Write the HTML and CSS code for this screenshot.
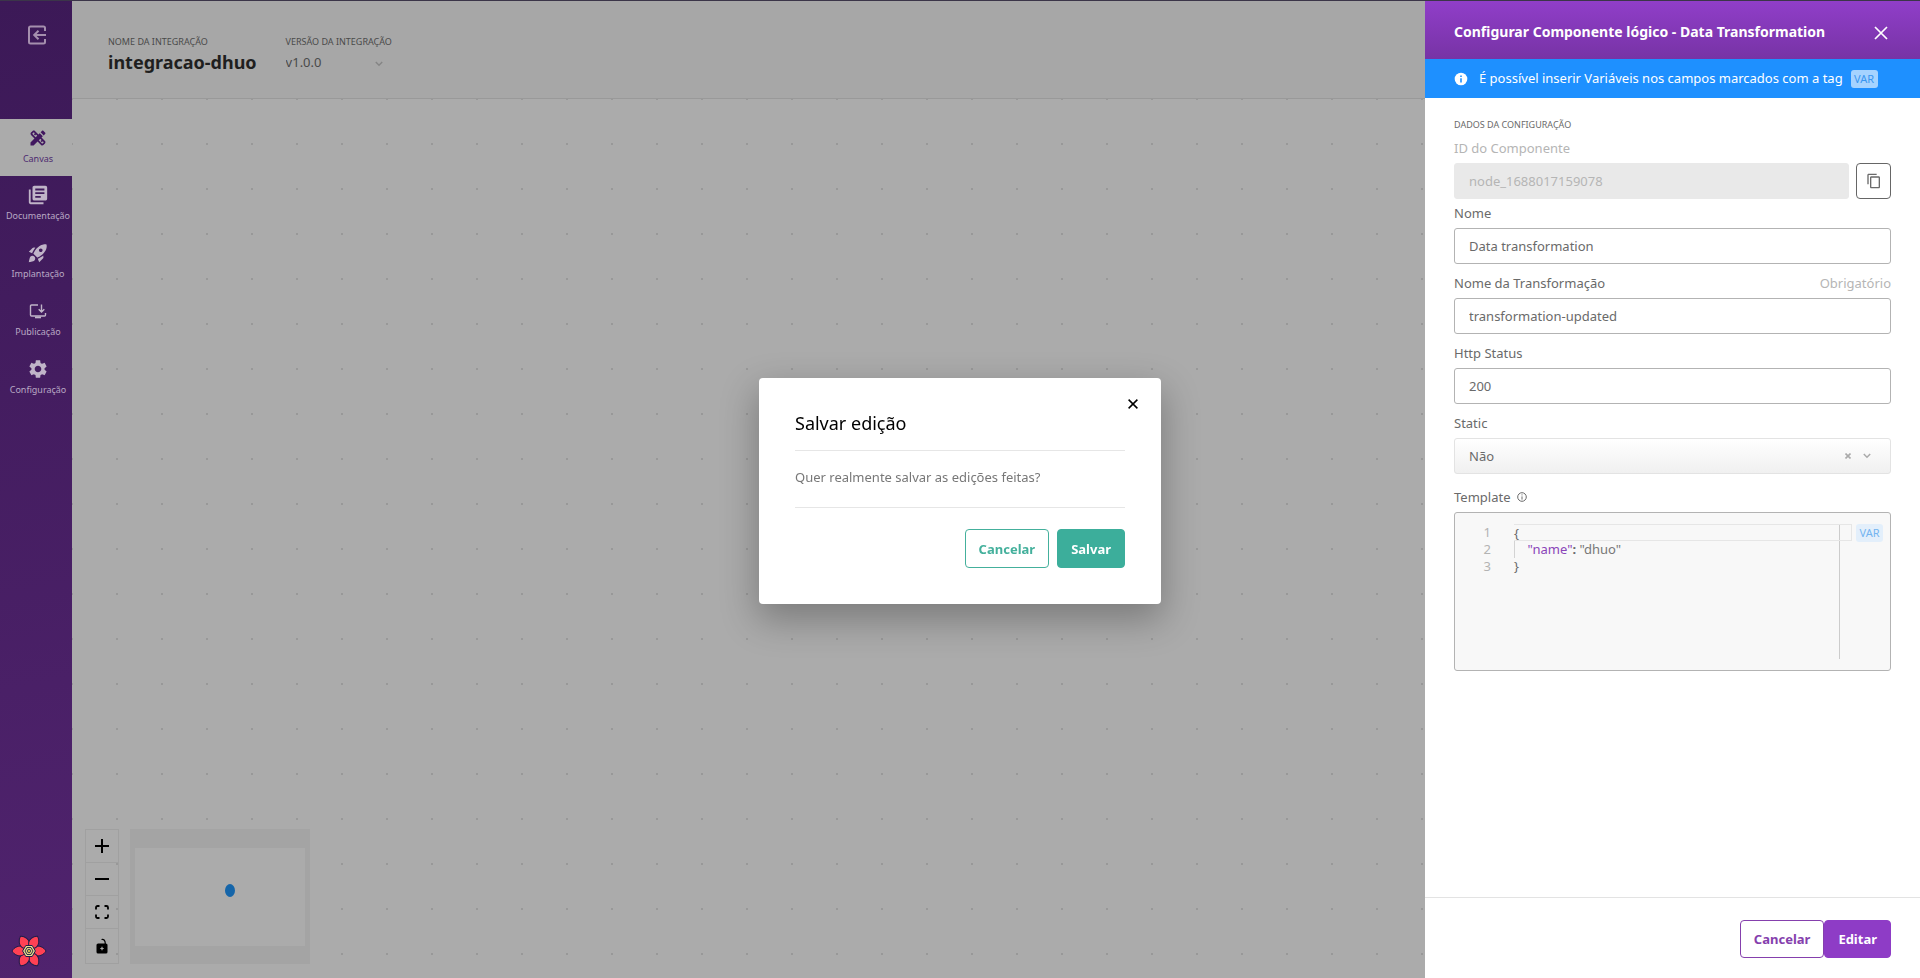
FILE: index.html
```html
<!DOCTYPE html>
<html lang="pt-BR">
<head>
<meta charset="utf-8">
<title>integracao-dhuo</title>
<link rel="stylesheet" href="styles.css">
</head>
<body>
<div class="app">
  <nav class="sidebar">
    <button class="exit" type="button" aria-label="Sair">
      <svg width="20" height="20" viewBox="0 0 20 20" fill="none" stroke="currentColor" stroke-width="2"><path d="M18 6V3a1.500 1.500 0 0 0-1.500-1.500h-13A1.500 1.500 0 0 0 2 3v14a1.500 1.500 0 0 0 1.500 1.500h13A1.500 1.500 0 0 0 18 17v-3M19 10H8M11.500 5.700 7.200 10l4.300 4.300"/></svg>
    </button>
    <a class="nav-item active" href="#canvas">
      <svg width="20" height="20" viewBox="0 0 24 24" fill="currentColor"><path d="M16.240 11.510l1.570-1.570-3.750-3.750-1.570 1.570-4.140-4.130c-.78-.78-2.050-.78-2.830 0l-1.900 1.900c-.78.78-.78 2.050 0 2.830l4.130 4.130L3 17.250V21h3.750l4.760-4.760 4.130 4.130c.95.95 2.230.6 2.830 0l1.900-1.900c.78-.78.78-2.050 0-2.830l-4.130-4.130zm-7.060-.44L5.040 6.940l1.890-1.900L8.200 6.310 7.020 7.500l1.410 1.410 1.190-1.190 1.450 1.450-1.890 1.900zm7.880 7.890l-4.130-4.130 1.900-1.900 1.450 1.450-1.190 1.190 1.410 1.410 1.190-1.190 1.270 1.270-1.900 1.900zM20.710 7.040c.39-.39.39-1.020 0-1.410l-2.340-2.340c-.47-.47-1.120-.29-1.410 0l-1.830 1.830 3.750 3.750 1.830-1.830z"/></svg>
      <span>Canvas</span>
    </a>
    <a class="nav-item" href="#documentacao">
      <svg width="22" height="22" viewBox="0 0 24 24" fill="currentColor"><path d="M4 6H2v14c0 1.100.9 2 2 2h14v-2H4V6z"/><path d="M20 2H8c-1.100 0-2 .9-2 2v12c0 1.100.9 2 2 2h12c1.100 0 2-.9 2-2V4c0-1.100-.9-2-2-2zm-1 9H9V9h10v2zm-4 4H9v-2h6v2zm4-8H9V5h10v2z"/></svg>
      <span>Documentação</span>
    </a>
    <a class="nav-item" href="#implantacao">
      <svg width="22" height="22" viewBox="0 0 24 24" fill="currentColor" fill-rule="evenodd"><path d="M9.190 6.350c-2.040 2.290-3.440 5.580-3.570 5.890L2 10.690l4.050-4.050c.47-.47 1.150-.68 1.810-.55l1.330.26zM11.170 17s3.740-1.550 5.890-3.700c5.400-5.400 4.500-9.620 4.210-10.570-.95-.3-5.170-1.190-10.570 4.210C8.550 9.090 7 12.830 7 12.830L11.170 17zm6.480-2.190c-2.290 2.040-5.580 3.440-5.890 3.570L13.310 22l4.050-4.050c.47-.47.68-1.150.55-1.810l-.26-1.330zM9 18c0 .83-.34 1.580-.88 2.120C6.940 21.300 2 22 2 22s.7-4.940 1.880-6.120A2.996 2.996 0 0 1 9 18zm4-9c0-1.100.9-2 2-2s2 .9 2 2-.9 2-2 2-2-.9-2-2z"/></svg>
      <span>Implantação</span>
    </a>
    <a class="nav-item" href="#publicacao">
      <svg width="18" height="18" viewBox="0 0 18 18" fill="none" stroke="currentColor" stroke-width="1.400"><path d="M9 3H2.500a1 1 0 0 0-1 1v9a1 1 0 0 0 1 1h13a1 1 0 0 0 1-1v-2M12.500 2.500v7M9.700 7.200l2.800 2.800 2.800-2.800"/><path d="M6 14.500h6v1.800H6z" fill="currentColor" stroke="none"/></svg>
      <span>Publicação</span>
    </a>
    <a class="nav-item" href="#configuracao">
      <svg width="22" height="22" viewBox="0 0 24 24" fill="currentColor"><path d="M19.140 12.940c.04-.3.060-.61.060-.94 0-.32-.02-.64-.07-.94l2.030-1.580c.18-.14.23-.41.12-.61l-1.920-3.320c-.12-.22-.37-.29-.59-.22l-2.390.96c-.5-.38-1.030-.7-1.620-.94l-.36-2.540c-.04-.24-.24-.41-.48-.41h-3.840c-.24 0-.43.17-.47.41l-.36 2.540c-.59.24-1.130.57-1.620.94l-2.390-.96c-.22-.08-.47 0-.59.22L2.740 8.870c-.12.21-.08.47.12.61l2.030 1.580c-.05.3-.09.63-.09.94s.02.64.07.94l-2.030 1.580c-.18.14-.23.41-.12.61l1.920 3.320c.12.22.37.29.59.22l2.390-.96c.5.38 1.030.7 1.620.94l.36 2.540c.05.24.24.41.48.41h3.840c.24 0 .44-.17.47-.41l.36-2.540c.59-.24 1.130-.56 1.620-.94l2.390.96c.22.080.47 0 .59-.22l1.920-3.320c.12-.22.070-.47-.12-.61l-2.010-1.580zM12 15.600c-1.980 0-3.600-1.620-3.600-3.600s1.620-3.600 3.600-3.600 3.600 1.620 3.600 3.600-1.620 3.600-3.600 3.600z"/></svg>
      <span>Configuração</span>
    </a>
    <button class="devtools" type="button" aria-label="React Query Devtools">
      <svg width="36" height="34" viewBox="-18 -17 36 34">
        <g fill="#ff4154" stroke="#1d1c4b" stroke-width="1">
          <path id="petal" d="M4-1.500C5-4.500 8.500-5.500 12-4.300 14.500-3.300 16.300-1.500 17 0 16.300 1.500 14.500 3.300 12 4.300 8.500 5.500 5 4.500 4 1.500z"/>
          <use href="#petal" transform="rotate(60)"/><use href="#petal" transform="rotate(120)"/><use href="#petal" transform="rotate(180)"/><use href="#petal" transform="rotate(240)"/><use href="#petal" transform="rotate(300)"/>
        </g>
        <path d="M-3.200-5.500h6.400L6.400 0 3.200 5.500h-6.400L-6.400 0z" fill="#e8e08c" stroke="#1d1c4b"/>
        <path d="M-2-3.500h4L4 0 2 3.500h-4L-4 0z" fill="#d9d07c" stroke="#1d1c4b" stroke-width=".9"/>
        <circle r="1.600" fill="#e0c34a" stroke="#1d1c4b" stroke-width=".8"/>
      </svg>
    </button>
  </nav>

  <main class="main">
    <header class="topbar">
      <div class="field-group">
        <span class="overline">NOME DA INTEGRAÇÃO</span>
        <h1 class="name">integracao-dhuo</h1>
      </div>
      <div class="field-group">
        <label class="overline" for="version">VERSÃO DA INTEGRAÇÃO</label>
        <div class="version">
          <select id="version"><option>v1.0.0</option></select>
          <svg width="8" height="6" viewBox="0 0 8 6" fill="none" stroke="currentColor" stroke-width="1.400"><path d="M.8 1 4 4.200 7.200 1"/></svg>
        </div>
      </div>
    </header>
    <section class="canvas">
      <div class="tools">
        <div class="controls">
          <button type="button" aria-label="Aumentar zoom"><svg width="14" height="14" viewBox="0 0 14 14" stroke="#000" stroke-width="2"><path d="M7 0v14M0 7h14"/></svg></button>
          <button type="button" aria-label="Diminuir zoom"><svg width="14" height="14" viewBox="0 0 14 14" stroke="#000" stroke-width="2"><path d="M0 7h14"/></svg></button>
          <button type="button" aria-label="Ajustar à tela"><svg width="14" height="14" viewBox="0 0 14 14" fill="none" stroke="#000" stroke-width="1.800"><path d="M1 4.500V2.500A1.500 1.500 0 0 1 2.500 1h2M9.500 1h2A1.500 1.500 0 0 1 13 2.500v2M13 9.500v2a1.500 1.500 0 0 1-1.500 1.500h-2M4.500 13h-2A1.500 1.500 0 0 1 1 11.500v-2"/></svg></button>
          <button type="button" aria-label="Bloquear"><svg width="12" height="16" viewBox="0 0 12 16"><path d="M5.500 1.500C8 1 9.300 2.500 9.300 6" fill="none" stroke="#000" stroke-width="1.200"/><rect x=".5" y="5.500" width="11" height="10" rx="1.600"/><path d="M6 8.800v3.400M4.300 10.500h3.400" stroke="#ababab" stroke-width="1.200"/></svg></button>
        </div>
        <div class="minimap"><div class="viewport"><span class="node"></span></div></div>
      </div>
    </section>
  </main>

  <aside class="drawer">
    <header class="drawer-head">
      <h2>Configurar Componente lógico - Data Transformation</h2>
      <button class="close" type="button" aria-label="Fechar"><svg width="14" height="14" viewBox="0 0 14 14" stroke="#fff" stroke-width="1.700"><path d="M1 1l12 12M13 1 1 13"/></svg></button>
    </header>
    <div class="notice">
      <svg width="14" height="14" viewBox="0 0 14 14"><circle cx="7" cy="7" r="6.300" fill="#fff"/><path d="M7 3.500v1.500M7 6.200v4.300" stroke="#1e90ff" stroke-width="1.600"/></svg>
      <span>É possível inserir Variáveis nos campos marcados com a tag</span>
      <span class="tag tag-light">VAR</span>
    </div>
    <form class="form">
      <span class="overline">DADOS DA CONFIGURAÇÃO</span>
      <div class="field">
        <div class="label-row muted"><label for="cid">ID do Componente</label></div>
        <div class="copy-row">
          <input id="cid" class="input" type="text" value="node_1688017159078" disabled>
          <button class="copy" type="button" aria-label="Copiar"><svg width="16" height="16" viewBox="0 0 24 24" fill="currentColor"><path d="M16 1H4c-1.100 0-2 .9-2 2v14h2V3h12V1zm3 4H8c-1.100 0-2 .9-2 2v14c0 1.100.9 2 2 2h11c1.100 0 2-.9 2-2V7c0-1.100-.9-2-2-2zm0 16H8V7h11v14z"/></svg></button>
        </div>
      </div>
      <div class="field">
        <div class="label-row"><label for="nome">Nome</label></div>
        <input id="nome" class="input" type="text" value="Data transformation">
      </div>
      <div class="field">
        <div class="label-row"><label for="transf">Nome da Transformação</label><span class="muted">Obrigatório</span></div>
        <input id="transf" class="input" type="text" value="transformation-updated">
      </div>
      <div class="field">
        <div class="label-row"><label for="status">Http Status</label></div>
        <input id="status" class="input" type="text" value="200">
      </div>
      <div class="field">
        <div class="label-row"><label for="static">Static</label></div>
        <div class="select-wrap">
          <select id="static" class="input"><option>Não</option></select>
          <div class="select-icons">
            <button class="clear" type="button" aria-label="Limpar"><svg width="6" height="6" viewBox="0 0 6 6" stroke="currentColor" stroke-width="1.600"><path d="M.5.5l5 5M5.500.5l-5 5"/></svg></button>
            <svg width="8" height="6" viewBox="0 0 8 6" fill="none" stroke="currentColor" stroke-width="1.500"><path d="M.8 1 4 4.200 7.200 1"/></svg>
          </div>
        </div>
      </div>
      <div class="field template">
        <div class="label-row"><span id="tpl">Template</span><svg width="10" height="10" viewBox="0 0 10 10" fill="none" stroke="currentColor"><circle cx="5" cy="5" r="4.300"/><path d="M5 2.400v1M5 4.400v3.200"/></svg></div>
        <div class="editor" role="textbox" aria-multiline="true" aria-labelledby="tpl">
          <div class="gutter"><span>1</span><span>2</span><span>3</span></div>
          <div class="code">
            <div class="line current">{</div>
            <div class="line guide">    <span class="key">"name"</span><b>:</b> <span class="str">"dhuo"</span></div>
            <div class="line">}</div>
          </div>
          <span class="tag tag-pale">VAR</span>
        </div>
      </div>
    </form>
    <footer class="drawer-foot">
      <button class="btn outline-purple" type="button">Cancelar</button>
      <button class="btn solid-purple" type="button">Editar</button>
    </footer>
  </aside>

  <div class="overlay">
    <div class="modal" role="dialog" aria-labelledby="dlg">
      <button class="modal-close" type="button" aria-label="Fechar"><svg width="10" height="10" viewBox="0 0 10 10" stroke="#000" stroke-width="1.500"><path d="M.6.6l8.800 8.800M9.400.6.6 9.400"/></svg></button>
      <h2 id="dlg">Salvar edição</h2>
      <p>Quer realmente salvar as edições feitas?</p>
      <div class="actions">
        <button class="btn outline-green" type="button">Cancelar</button>
        <button class="btn solid-green" type="button">Salvar</button>
      </div>
    </div>
  </div>
</div>
</body>
</html>
```
FILE: styles.css
```css
* { box-sizing: border-box; }
body { margin: 0; font: 13px/18px "Noto Sans", sans-serif; color: #6a6a6a; }
h1, h2, p { margin: 0; }
button, input, select { font: inherit; color: inherit; margin: 0; padding: 0; }
button { background: none; border: 0; cursor: pointer; display: flex; align-items: center; justify-content: center; }
svg { flex: none; display: block; }
select { appearance: none; background: none; border: 0; }

.app { display: flex; min-height: 100vh; border-top: 1px solid #3b3549; }

.sidebar { width: 72px; flex: none; display: flex; flex-direction: column; background: linear-gradient(170deg, #3c1957, #50236e); }
.exit { width: 74px; height: 68px; margin-bottom: 50px; color: #a58fae; }
.nav-item { height: 58px; padding: 8px 0 0 4px; display: grid; grid-template-rows: 22px 18px; gap: 1px; place-items: center; justify-content: center; align-content: start; font-size: 9px; line-height: 16px; color: #b9a9c4; text-decoration: none; }
.nav-item svg { color: #c0b4c8; }
.nav-item.active { height: 57px; background: #ababab; color: #4d2a70; }
.nav-item.active svg { color: #41175f; }
.devtools { margin-top: auto; width: 58px; height: 54px; }

.main { flex: 1; min-width: 0; display: flex; flex-direction: column; }
.topbar { height: 98px; background: #a7a7a7; border-bottom: 1px solid #999; padding: 34px 36px 0; display: flex; gap: 29px; color: #4a4a4a; }
.field-group { display: flex; flex-direction: column; }
.overline { font-size: 9px; line-height: 14px; }
.name { font-size: 18px; line-height: 26px; color: #1f1f1f; }
.version { position: relative; color: #4a4a4a; }
.version select { width: 100%; height: 26px; }
.version svg { position: absolute; right: 9px; top: 12px; color: #858585; }
.canvas { flex: 1; position: relative; background: radial-gradient(circle at 23px 23px, #989898 1px, transparent 1px) 22px 22px / 45px 45px #ababab; }
.tools { position: absolute; left: 13px; bottom: 14px; display: flex; gap: 11px; }
.controls { border: 1px solid #a0a0a0; display: grid; }
.controls button { width: 32px; height: 33px; border-bottom: 1px solid #a0a0a0; }
.controls button:last-child { height: 34px; border-bottom: 0; }
.minimap { width: 180px; padding: 19px 5px 18px; background: #a4a4a4; }
.viewport { height: 100%; background: #ababab; display: grid; place-items: center; }
.node { width: 10px; height: 13px; border-radius: 50%; background: #1565a9; margin: 0 0 14px 20px; }

.drawer { width: 495px; flex: none; background: #fff; display: flex; flex-direction: column; }
.drawer-head { height: 58px; padding: 4px 29px 0; display: flex; align-items: center; justify-content: space-between; background: linear-gradient(#903ec9, #7733a5); color: #fff; }
.drawer-head h2 { font-size: 14px; line-height: 20px; }
.close { width: 20px; height: 22px; padding-top: 2px; }
.notice { height: 39px; padding: 0 29px; display: flex; align-items: center; background: #1e90ff; color: #fff; }
.notice span:nth-child(2) { margin: 0 8px 2px 11px; }
.tag { width: 27px; height: 18px; border-radius: 3px; font-size: 11px; line-height: 17px; text-align: center; flex: none; }
.tag-light { background: #a5d3ff; color: #3996f0; }
.tag-pale { background: #e3effb; color: #74b4f0; }
.form { flex: 1; padding: 20px 29px; display: flex; flex-direction: column; }
.form > .overline { margin-bottom: 7px; }
.field { display: flex; flex-direction: column; gap: 6px; margin-bottom: 10px; }
.field .label-row { display: flex; justify-content: space-between; }
.muted { color: #b5b5b5; }
.input { width: 100%; height: 36px; padding: 0 14px 1px; border: 1px solid #b3b3b3; border-radius: 3px; background: #fff; }
.copy-row { display: flex; gap: 7px; align-items: center; }
.copy-row .input { flex: 1; background: #e9e9e9; border-color: #e9e9e9; color: #b5b5b5; }
.field:has(.copy-row) { margin-bottom: 5px; }
.copy { width: 35px; height: 36px; border: 1px solid #666; border-radius: 4px; }
.select-wrap { position: relative; }
.select-wrap .input { display: block; border-color: #e3e3e3; background: linear-gradient(#fff, #f0f0f0); }
.select-icons { position: absolute; right: 20px; top: 0; height: 36px; display: flex; align-items: center; gap: 12px; color: #aaa; }
.template { margin-top: 4px; }
.template .label-row { justify-content: flex-start; align-items: center; gap: 7px; }
.editor { height: 159px; padding: 11px 7px 11px 12px; border: 1px solid #b3b3b3; border-radius: 3px; background: #f8f8f8; display: flex; line-height: 17px; }
.gutter { width: 24px; margin-right: 23px; display: flex; flex-direction: column; text-align: right; color: #b3b3b3; }
.code { flex: 1; margin-right: 4px; background: linear-gradient(#ccc, #ccc) right 12px top / 1px 100% no-repeat; }
.line { height: 17px; white-space: pre; }
.line.current { border: 1px solid #e6e6e6; border-left-width: 0; line-height: 16px; }
.line.guide { box-shadow: inset 1px 0 #d3d3d3; }
.key { color: #8a45b8; }
.str { color: #777; }
.drawer-foot { height: 81px; padding: 22px 29px 0; border-top: 1px solid #e3e3e3; display: flex; justify-content: flex-end; }

.btn { height: 38px; padding: 0 13px; border: 1px solid; border-radius: 4px; font-weight: 700; }
.outline-purple { color: #8540ad; }
.solid-purple { background: #8e3cc6; border-color: #8e3cc6; color: #fff; }
.outline-green { color: #44b09c; }
.solid-green { background: #3cae9b; border-color: #3cae9b; color: #fff; }

.overlay { position: fixed; inset: 0; padding-top: 4px; display: grid; place-items: center; pointer-events: none; }
.modal { position: relative; width: 402px; padding: 35px 36px 36px; background: #fff; border-radius: 4px; box-shadow: 0 14px 36px 2px rgba(0, 0, 0, .28); pointer-events: auto; }
.modal h2 { font-size: 18px; line-height: 20px; font-weight: 400; color: #000; padding-bottom: 17px; border-bottom: 1px solid #e6e6e6; }
.modal p { color: #777; padding: 17px 0 21px; border-bottom: 1px solid #e6e6e6; }
.modal-close { position: absolute; right: 18px; top: 16px; width: 20px; height: 20px; }
.modal .btn { height: 39px; }
.actions { display: flex; justify-content: flex-end; gap: 8px; padding-top: 21px; }
```
